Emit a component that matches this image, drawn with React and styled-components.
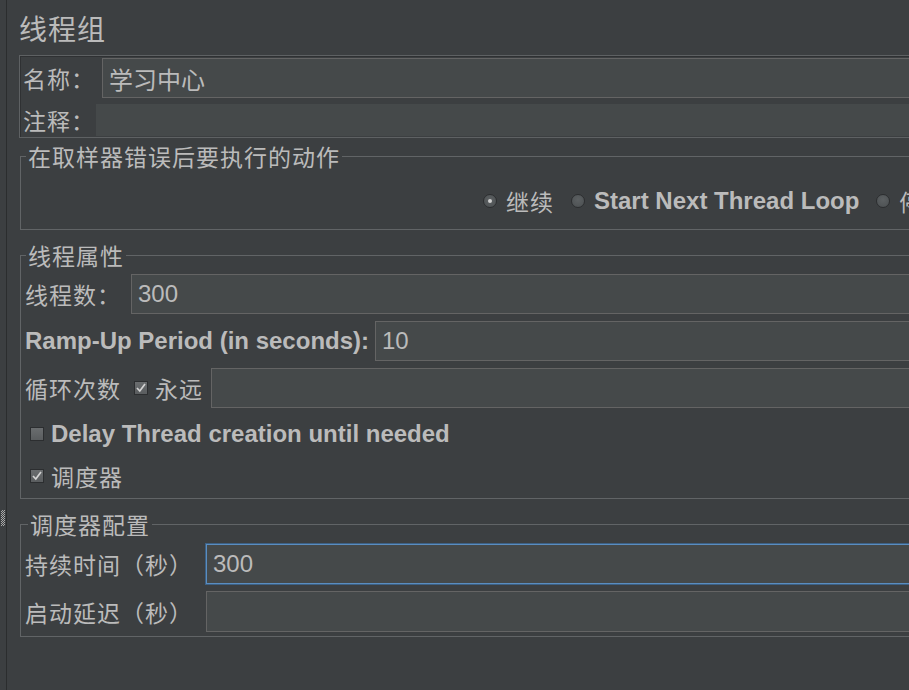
import React from 'react';
import styled, { createGlobalStyle, css } from 'styled-components';

const GlobalStyle = createGlobalStyle`
  html, body {
    margin: 0;
    padding: 0;
    background: #3c3f41;
    overflow: hidden;
  }
  body {
    font-family: "Liberation Sans", "Noto Sans CJK SC", sans-serif;
    color: #bbbbbb;
  }
`;

const Page = styled.div`
  display: flex;
  width: 909px;
  height: 690px;
  overflow: hidden;
  background: #3c3f41;
`;

const Sidebar = styled.div`
  flex: 0 0 7px;
  border-right: 1px solid #2b2d2e;
  padding-top: 510px;
  box-sizing: border-box;
`;

const Grip = styled.div`
  width: 4px;
  height: 16px;
  margin-left: 1px;
  background: repeating-conic-gradient(#a8a8a8 0 25%, #3c3f41 0 50%) 0 0 / 2px 2px;
`;

const Main = styled.div`
  flex: 0 0 1200px;
  padding-left: 12px;
  box-sizing: border-box;
`;

const Title = styled.div`
  height: 55px;
  display: flex;
  align-items: center;
  font-family: "Noto Sans CJK SC", sans-serif;
  font-size: 28px;
  letter-spacing: 1px;
`;

const NamePanel = styled.div`
  border: 1px solid #5e6163;
  box-shadow: inset 1px 1px 0 #2f3133;
  padding: 2px 0 1px 3px;
  display: flex;
  flex-direction: column;
  gap: 6px;
`;

const Row = styled.div`
  display: flex;
  align-items: center;
  height: ${p => p.$h || 40}px;
`;

const Label = styled.span`
  font-family: "Noto Sans CJK SC", sans-serif;
  font-size: 23px;
  letter-spacing: 1px;
  white-space: nowrap;
  ${p => p.$w && css`flex: 0 0 ${p.$w}px;`}
  ${p => p.$bold && css`
    font-family: "Liberation Sans", sans-serif;
    font-weight: bold;
    font-size: 24px;
    letter-spacing: 0;
  `}
`;

const Field = styled.div`
  flex: 1;
  align-self: stretch;
  box-sizing: border-box;
  background: #45494a;
  border: 1px solid ${p => (p.$plain ? '#45494a' : '#646464')};
  display: flex;
  align-items: center;
  padding-left: 6px;
  font-size: 24px;
  ${p => p.$focus && css`
    border: 1px solid #5a8dc0;
    box-shadow: 0 0 0 1px #3d6185;
  `}
`;

const Group = styled.fieldset`
  margin: ${p => p.$top}px 0 0 1px;
  padding: ${p => p.$pad};
  border: 1px solid #616466;
  min-width: 0;
`;

const Legend = styled.legend`
  margin-left: ${p => p.$ml}px;
  padding: 0 2px;
  font-family: "Noto Sans CJK SC", sans-serif;
  font-size: 23px;
  line-height: 24px;
  letter-spacing: 1px;
`;

const RadioRow = styled.div`
  display: flex;
  align-items: center;
  height: 24px;
  padding-left: 462px;
  white-space: nowrap;
`;

const Radio = styled.span`
  flex: 0 0 14px;
  height: 14px;
  border-radius: 50%;
  box-sizing: border-box;
  background: radial-gradient(circle at 50% 40%, #5c6062, #4b4f51);
  border: 1px solid #2c2e30;
  margin-right: 9px;
  display: flex;
  align-items: center;
  justify-content: center;
  &::after {
    content: '';
    width: 4px;
    height: 4px;
    border-radius: 50%;
    background: ${p => (p.$on ? '#d0d0d0' : 'transparent')};
  }
`;

const Option = styled.span`
  margin-right: 17px;
  font-family: ${p => (p.$bold ? '"Liberation Sans"' : '"Noto Sans CJK SC"')}, sans-serif;
  font-weight: ${p => (p.$bold ? 'bold' : 'normal')};
  font-size: ${p => (p.$bold ? 24 : 23)}px;
  letter-spacing: ${p => (p.$bold ? 0 : 1)}px;
`;

const Rows = styled.div`
  display: flex;
  flex-direction: column;
  gap: 7px;
`;

const Box = styled.span`
  flex: 0 0 14px;
  height: 14px;
  box-sizing: border-box;
  background: linear-gradient(#6a6d6f, #5a5d5f);
  border: 1px solid #2c2e30;
  margin: ${p => p.$m || '0 7px 0 5px'};
  display: flex;
  align-items: center;
  justify-content: center;
`;

const CheckRow = styled.div`
  display: flex;
  align-items: center;
  height: ${p => p.$h}px;
  margin-top: ${p => p.$mt || 0}px;
`;

const Check = () => (
  <svg width="12" height="12" viewBox="0 0 12 12">
    <polyline points="2,6 4.8,9 10,2" fill="none" stroke="#d4d4d4" strokeWidth="1.7" />
  </svg>
);

export default function App() {
  return (
    <Page>
      <GlobalStyle />
      <Sidebar>
        <Grip />
      </Sidebar>
      <Main>
        <Title>线程组</Title>

        <NamePanel>
          <Row $h={40}>
            <Label $w={79}>名称：</Label>
            <Field>学习中心</Field>
          </Row>
          <Row $h={32}>
            <Label $w={73}>注释：</Label>
            <Field $plain />
          </Row>
        </NamePanel>

        <Group $top={6} $pad="21px 0 16px 0">
          <Legend $ml={5}>在取样器错误后要执行的动作</Legend>
          <RadioRow>
            <Radio $on />
            <Option>继续</Option>
            <Radio />
            <Option $bold>Start Next Thread Loop</Option>
            <Radio />
            <Option>停止线程</Option>
            <Radio />
            <Option>停止测试</Option>
          </RadioRow>
        </Group>

        <Group $top={13} $pad="7px 0 2px 4px">
          <Legend $ml={1}>线程属性</Legend>
          <Rows>
            <Row>
              <Label $w={106}>线程数：</Label>
              <Field>300</Field>
            </Row>
            <Row>
              <Label $bold $w={350}>Ramp-Up Period (in seconds):</Label>
              <Field>10</Field>
            </Row>
            <Row>
              <Label>循环次数</Label>
              <Box $m="0 7px 0 13px"><Check /></Box>
              <Label $w={56}>永远</Label>
              <Field />
            </Row>
          </Rows>
          <CheckRow $h={44} $mt={4}>
            <Box />
            <Label $bold>Delay Thread creation until needed</Label>
          </CheckRow>
          <CheckRow $h={40}>
            <Box><Check /></Box>
            <Label>调度器</Label>
          </CheckRow>
        </Group>

        <Group $top={13} $pad="8px 0 4px 4px">
          <Legend $ml={3}>调度器配置</Legend>
          <Rows>
            <Row>
              <Label $w={181}>持续时间（秒）</Label>
              <Field $focus>300</Field>
            </Row>
            <Row $h={41}>
              <Label $w={181}>启动延迟（秒）</Label>
              <Field />
            </Row>
          </Rows>
        </Group>
      </Main>
    </Page>
  );
}
